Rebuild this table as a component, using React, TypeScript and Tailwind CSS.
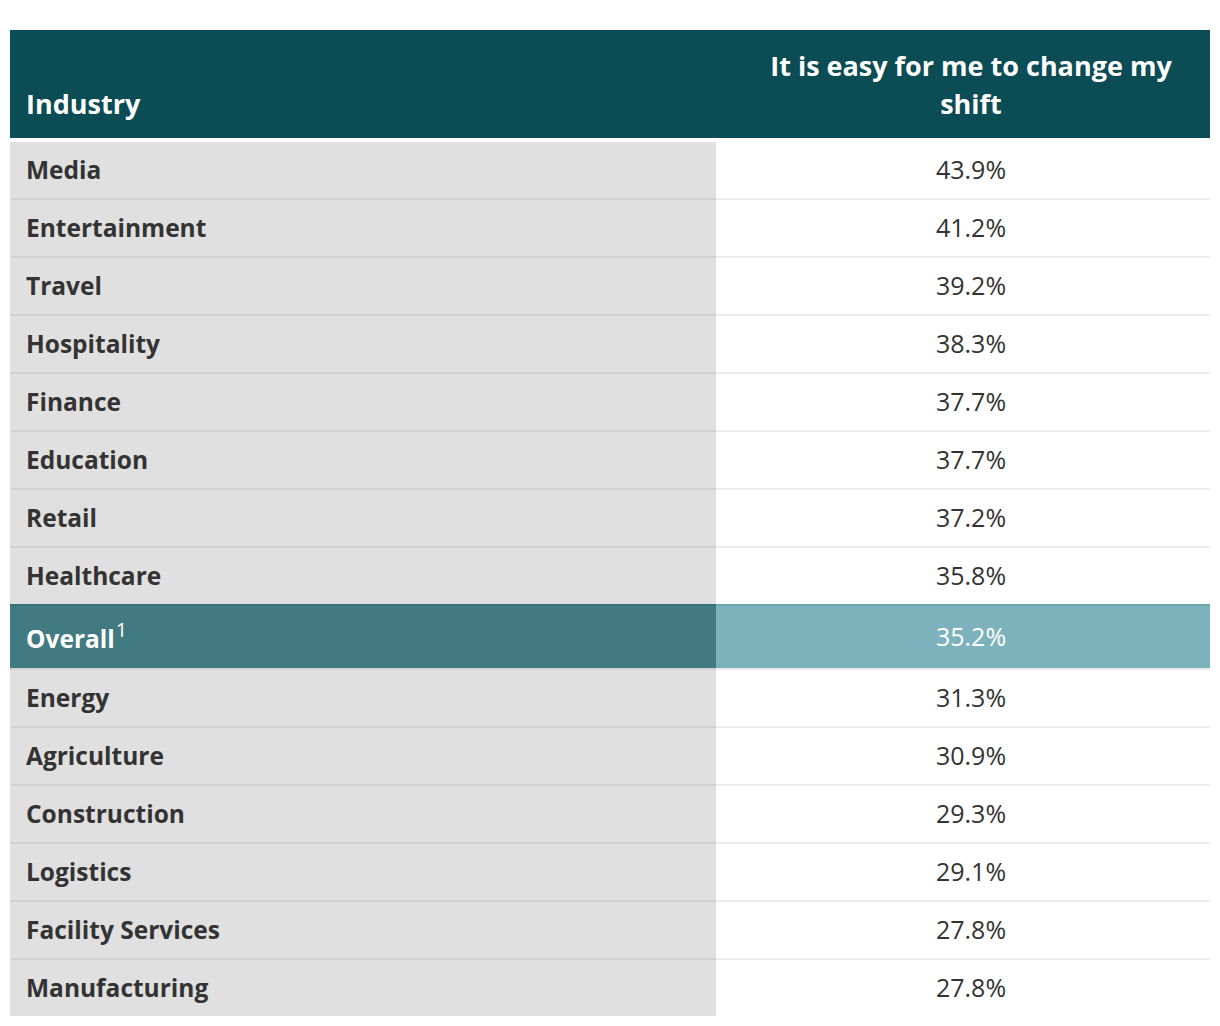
import React from "react";

const rows: [string, string][] = [
  ["Media", "43.9%"],
  ["Entertainment", "41.2%"],
  ["Travel", "39.2%"],
  ["Hospitality", "38.3%"],
  ["Finance", "37.7%"],
  ["Education", "37.7%"],
  ["Retail", "37.2%"],
  ["Healthcare", "35.8%"],
];

const rows2: [string, string][] = [
  ["Energy", "31.3%"],
  ["Agriculture", "30.9%"],
  ["Construction", "29.3%"],
  ["Logistics", "29.1%"],
  ["Facility Services", "27.8%"],
  ["Manufacturing", "27.8%"],
];

function Row({ name, value, last, noBorder }: { name: string; value: string; last?: boolean; noBorder?: boolean }) {
  const b = last || noBorder;
  return (
    <div className="grid grid-cols-[706px_494px]">
      <div
        className={
          "bg-[#e0e0e0] h-[56px] flex items-center pl-[16px] font-bold text-[24.5px] text-[#333333] " +
          (b ? "" : "box-content border-b-2 border-[#d2d2d2]")
        }
      >
        {name}
      </div>
      <div
        className={
          "bg-white h-[56px] flex items-center justify-center pl-[16px] text-[25px] text-[#333333] " +
          (b ? "" : "box-content border-b-2 border-[#ebebeb]")
        }
      >
        {value}
      </div>
    </div>
  );
}

export default function App() {
  return (
    <div className="bg-white min-h-[1026px] pt-[30px] px-[10px] pb-[10px]" style={{ fontFamily: '"Open Sans", sans-serif' }}>
      <div className="w-[1200px]">
        <div className="grid grid-cols-[706px_494px] bg-[#0b4c55] text-white font-bold text-[27px] leading-[38px] h-[108px]">
          <div className="flex items-end pl-[16px] pb-[15px]">Industry</div>
          <div className="flex items-end justify-center text-center pl-[16px] pb-[15px]">
            <span>
              It is easy for me to change my
              <br />
              shift
            </span>
          </div>
        </div>
        <div className="h-[4px] bg-white" />
        {rows.map(([n, v], i) => (
          <Row key={n} name={n} value={v} noBorder={i === rows.length - 1} />
        ))}
        <div className="grid grid-cols-[706px_494px]">
          <div className="bg-[#417a80] box-content border-t-2 border-b-2 border-t-[#39707a] border-b-[#d2d2d2] h-[62px] flex items-center pl-[16px] font-bold text-[24.5px] text-white">
            <span className="relative top-[2px]">
              Overall
              <span className="inline-block font-normal text-[20px] leading-none relative -top-[11px] ml-[1px]">1</span>
            </span>
          </div>
          <div className="bg-[#7bb2bb] box-content border-t-2 border-b-2 border-t-[#6ea6af] border-b-[#ebebeb] h-[62px] flex items-center justify-center pl-[16px] text-[25px] text-white">
            35.2%
          </div>
        </div>
        {rows2.map(([n, v], i) => (
          <Row key={n} name={n} value={v} last={i === rows2.length - 1} />
        ))}
      </div>
    </div>
  );
}
